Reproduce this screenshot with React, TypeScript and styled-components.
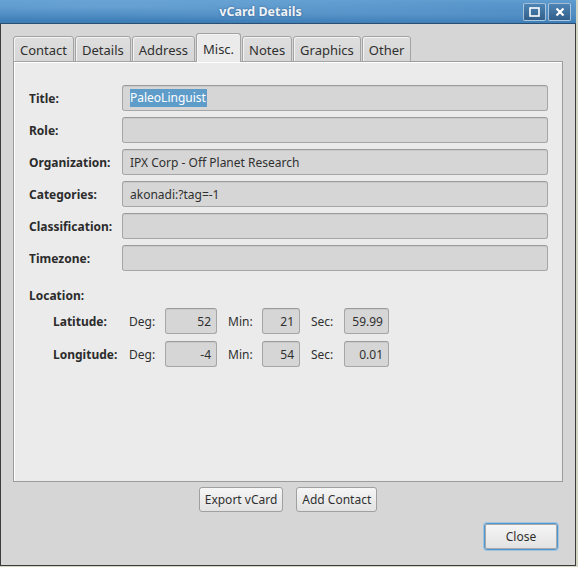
import React from "react";
import styled, { createGlobalStyle } from "styled-components";

const GlobalStyle = createGlobalStyle`
  html, body {
    margin: 0;
    padding: 0;
    background: #d3d6c2;
  }
  body {
    font-family: "Noto Sans", "Open Sans", sans-serif;
    font-size: 12px;
    color: #303030;
  }
`;

const Window = styled.div`
  width: 576px;
  height: 566px;
  box-sizing: border-box;
  border: 1px solid #3c3c3c;
  border-top: none;
  background: #d6d6d6;
  display: flex;
  flex-direction: column;
`;

const TitleBar = styled.div`
  height: 24px;
  margin: 0 -1px;
  box-sizing: border-box;
  border-bottom: 1px solid #2a4f72;
  background:
    radial-gradient(ellipse at 20% 30%, rgba(140, 190, 230, 0.35), transparent 60%),
    radial-gradient(ellipse at 75% 60%, rgba(120, 175, 220, 0.3), transparent 55%),
    linear-gradient(180deg, #609dd0 0%, #4b8ac2 45%, #3d7db6 100%);
  display: flex;
  align-items: center;
  padding-right: 5px;
`;

const Title = styled.div`
  flex: 1;
  text-align: center;
  font-weight: bold;
  font-size: 12.5px;
  color: #eef3f8;
  text-shadow: 0 0 2px rgba(20, 50, 90, 0.6);
`;

const WinButton = styled.div`
  width: 23px;
  height: 18px;
  margin-left: 2px;
  box-sizing: border-box;
  border: 1px solid rgba(210, 230, 245, 0.7);
  border-radius: 2px;
  background: linear-gradient(180deg, #4d84b4, #325f8a);
  display: flex;
  align-items: center;
  justify-content: center;
`;

const Body = styled.div`
  flex: 1;
  display: flex;
  flex-direction: column;
  padding-left: 12px;
`;

const TabBar = styled.div`
  display: flex;
  align-items: flex-end;
  gap: 1px;
  margin-top: 9px;
  position: relative;
  z-index: 1;
  margin-bottom: -1px;
`;

const Tab = styled.div<{ $active?: boolean }>`
  box-sizing: border-box;
  height: ${(p) => (p.$active ? "29px" : "26px")};
  padding: 0 6px;
  display: flex;
  align-items: center;
  padding-top: ${(p) => (p.$active ? "1px" : "2px")};
  border: 1px solid #a3a3a3;
  border-bottom: ${(p) => (p.$active ? "none" : "1px solid #a3a3a3")};
  border-radius: 3px 3px 0 0;
  background: ${(p) =>
    p.$active ? "#ebebeb" : "linear-gradient(180deg, #dedede, #d6d6d6)"};
  box-shadow: inset 1px 1px 0 #f4f4f4;
  color: #303030;
  font-size: 13px;
`;

const Panel = styled.div`
  width: 550px;
  height: 421px;
  box-sizing: border-box;
  border: 1px solid #9c9c9c;
  background: #ebebeb;
  box-shadow: inset 1px 1px 0 #ffffff;
  padding: 23px 14px 0 15px;
`;

const FormGrid = styled.div`
  display: grid;
  grid-template-columns: 93px 1fr;
  row-gap: 6px;
  align-items: center;
`;

const Label = styled.div<{ $indent?: number }>`
  font-weight: bold;
  font-size: 12px;
  color: #2c2c2c;
  padding-left: ${(p) => p.$indent ?? 0}px;
  white-space: nowrap;
`;

const Field = styled.div<{ $right?: boolean }>`
  height: 26px;
  box-sizing: border-box;
  border: 1px solid #a6a6a6;
  border-top-color: #9a9a9a;
  border-radius: 3px;
  background: #d6d6d6;
  box-shadow: inset 0 1px 0 #cbcbcb;
  display: flex;
  align-items: center;
  justify-content: ${(p) => (p.$right ? "flex-end" : "flex-start")};
  padding: 0 ${(p) => (p.$right ? "5px" : "7px")};
  font-size: 12px;
  color: #303030;
  white-space: nowrap;
  overflow: hidden;
`;

const Selected = styled.span`
  background: #5e9cc9;
  color: #ffffff;
  line-height: 18px;
  padding: 0 1px 0 0;
`;

const SectionLabel = styled(Label)`
  line-height: 17px;
  margin: 16px 0 4px;
`;

const CoordGrid = styled.div`
  display: grid;
  grid-template-columns: 76px 36px 52px 45px 38px 44px 45px;
  row-gap: 7px;
  align-items: center;
  margin-left: 24px;
`;

const Unit = styled.div<{ $indent?: number }>`
  padding-left: ${(p) => p.$indent ?? 0}px;
  font-size: 12px;
  color: #303030;
`;

const ButtonRow = styled.div`
  display: flex;
  justify-content: center;
  gap: 13px;
  margin-top: 5px;
  padding-right: 12px;
`;

const Button = styled.button<{ $focused?: boolean }>`
  font-family: "Noto Sans", "Open Sans", sans-serif;
  font-size: 12px;
  color: #303030;
  height: ${(p) => (p.$focused ? "27px" : "25px")};
  padding: 0 5px;
  box-sizing: border-box;
  border: 1px solid ${(p) => (p.$focused ? "#4f97d3" : "#a0a0a0")};
  border-radius: 3px;
  background: linear-gradient(180deg, #f6f6f6, #e2e2e2);
  box-shadow: ${(p) =>
    p.$focused ? "0 0 0 1px rgba(120, 180, 230, 0.55), inset 0 0 0 1px #a9a9a9" : "none"};
  width: ${(p) => (p.$focused ? "74px" : "auto")};
`;

const CloseRow = styled.div`
  display: flex;
  justify-content: flex-end;
  margin-top: 11px;
  padding-right: 17px;
`;

const fields: [string, React.ReactNode][] = [
  ["Title:", <Selected>PaleoLinguist</Selected>],
  ["Role:", ""],
  ["Organization:", "IPX Corp - Off Planet Research"],
  ["Categories:", "akonadi:?tag=-1"],
  ["Classification:", ""],
  ["Timezone:", ""],
];

const coords = [
  { name: "Latitude:", deg: "52", min: "21", sec: "59.99" },
  { name: "Longitude:", deg: "-4", min: "54", sec: "0.01" },
];

const tabs = ["Contact", "Details", "Address", "Misc.", "Notes", "Graphics", "Other"];

const App = () => {
  return (
    <>
      <GlobalStyle />
      <Window>
        <TitleBar>
          <Title>vCard Details</Title>
          <WinButton>
            <svg width="11" height="10" viewBox="0 0 11 10">
              <rect x="1" y="1" width="9" height="8" fill="none" stroke="#fff" strokeWidth="1.6" />
            </svg>
          </WinButton>
          <WinButton>
            <svg width="10" height="10" viewBox="0 0 10 10">
              <path d="M1.5 1.5 L8.5 8.5 M8.5 1.5 L1.5 8.5" stroke="#fff" strokeWidth="2.2" />
            </svg>
          </WinButton>
        </TitleBar>
        <Body>
          <TabBar>
            {tabs.map((t) => (
              <Tab key={t} $active={t === "Misc."}>
                {t}
              </Tab>
            ))}
          </TabBar>
          <Panel>
            <FormGrid>
              {fields.map(([label, value]) => (
                <React.Fragment key={label}>
                  <Label>{label}</Label>
                  <Field>{value}</Field>
                </React.Fragment>
              ))}
            </FormGrid>
            <SectionLabel>Location:</SectionLabel>
            <CoordGrid>
              {coords.map((c) => (
                <React.Fragment key={c.name}>
                  <Label>{c.name}</Label>
                  <Unit>Deg:</Unit>
                  <Field $right>{c.deg}</Field>
                  <Unit $indent={11}>Min:</Unit>
                  <Field $right>{c.min}</Field>
                  <Unit $indent={11}>Sec:</Unit>
                  <Field $right>{c.sec}</Field>
                </React.Fragment>
              ))}
            </CoordGrid>
          </Panel>
          <ButtonRow>
            <Button>Export vCard</Button>
            <Button>Add Contact</Button>
          </ButtonRow>
          <CloseRow>
            <Button $focused>Close</Button>
          </CloseRow>
        </Body>
      </Window>
    </>
  );
};

export default App;
